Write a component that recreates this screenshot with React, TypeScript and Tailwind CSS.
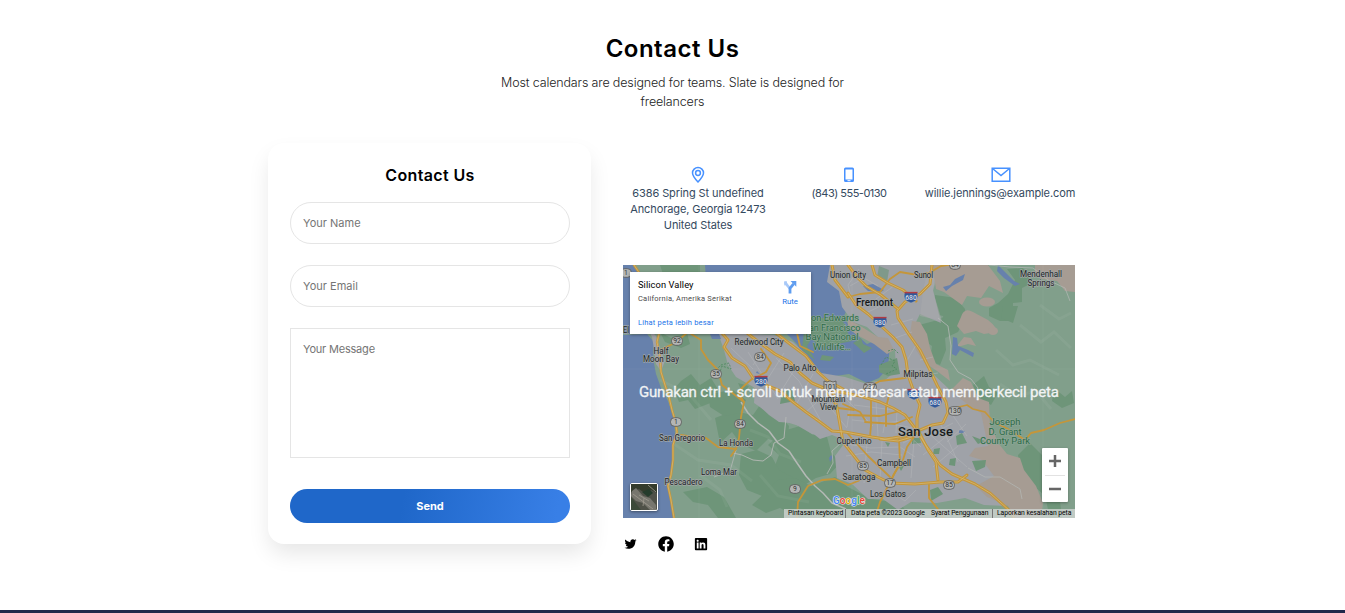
import React from "react";
import { FaTwitter, FaFacebook, FaLinkedin } from "react-icons/fa";

const highways = [
  // Pacific coast route
  "M634 265L642 277L650 292L655 312L660 330L657 342L660 357L661 372L665 385L669 397L672 410L675 420L677 432L673 445L673 460L671 475L668 486L671 500L674 518",
];

const freeways = [
  "M715 325L728 340L724 347L732 358L745 366L753 378L768 386L780 391L793 402L806 412L820 422L832 431L845 432L872 437L885 439L893 438L905 436L920 430L932 425L943 423L948 412L946 402L937 385L929 368L920 350L910 336L898 318L897 311L905 302L920 294L930 284L932 265",
  "M747 333L760 343L775 354L790 362L800 373L812 383L826 389L845 393L860 396L880 402L893 408L905 415L915 428L925 444L940 465L952 474L975 484L990 493L1010 511L1014 518",
  "M848 293L856 305L868 314L880 325L893 337L902 347L906 360L908 375L914 392L920 405L917 418L917 428L928 450L936 462L938 480",
  "M776 333L790 344L806 356L818 372L828 381L843 389",
  "M832 389L837 408L840 425L843 442L854 456L865 470L878 477L890 483L915 484L940 482L958 482L967 475",
  "M880 439L898 441L912 437",
  "M872 265L875 275L888 283L903 290L916 301",
  "M848 265L857 277L866 286L881 295L898 309",
  "M848 297L835 280L832 265",
];

const arterials = [
  "M660 350L675 343L688 332L701 340L701 349L708 360L718 370L722 385L735 395L744 402L741 417L739 438L736 449L718 447L706 438L693 437L681 435",
  "M736 449L731 456",
  "M848 297L860 294L880 292L890 279L900 272L918 275L929 273L941 266L960 263",
  "M753 378L745 385L738 392L744 402",
  "M761 349L771 363L766 372L755 378",
  "M797 518L798 502L808 486L822 480L835 479L848 485L858 481L870 474",
  "M870 437L871 425L871 400",
  "M886 426L886 408L889 395",
  "M865 422L895 424L912 417",
  "M843 404L860 412L865 420",
  "M848 415L880 416L900 411",
  "M826 392L838 408L854 410",
  "M863 390L880 381L905 378L920 373",
  "M899 439L900 463L890 482L880 502L875 518",
  "M848 434L868 456L890 477",
  "M918 431L907 447L903 460L894 474L888 487",
  "M929 485L929 498L941 513L943 518",
  "M955 408L967 405L973 409L985 412L994 422L1008 429L1025 440L1031 433L1044 430L1060 423L1075 419",
  "M813 352L800 346L797 333",
];

const streets = [
  "M748 352L778 399M731 348L753 369M770 342L753 365M784 353L767 380M798 364L780 393M813 374L796 405M776 358L799 381L822 423M818 393L847 428M806 412L824 396M839 392L873 426M852 391L847 427M889 400L883 433M842 443L870 448L900 447L915 457M852 420L884 423L911 420M854 405L894 410M876 402L878 436M897 409L896 433M846 456L871 452L902 455M867 443L864 483M882 441L880 480M914 441L911 478M926 431L967 467M941 425L958 462M920 440L953 423M901 428L921 447M923 455L953 431M933 467L958 446M902 411L921 434M850 286L864 278L878 286M852 300L848 285L859 269M876 299L895 285M868 312L889 302M891 325L913 319M895 338L912 332M916 345L905 364M920 360L933 357M925 375L938 373M941 398L967 436M966 424L947 442M890 491L905 501L916 490M903 443L928 430M881 422L913 428",
];

const routes = [
  ["1", 626, 273], ["92", 677, 341], ["84", 760, 357], ["35", 716, 374], ["1", 676, 422],
  ["84", 740, 424], ["9", 795, 489], ["237", 870, 387], ["85", 863, 466], ["17", 890, 483],
  ["85", 949, 485], ["130", 955, 411], ["84", 955, 265],
] as const;

const interstates = [
  ["280", 761, 381], ["680", 911, 297], ["880", 880, 322], ["880", 914, 394], ["680", 935, 402],
] as const;

const towns = [
  ["Union City", 848, 278, 36], ["Sunol", 923.5, 278, 19], ["Mendenhall", 1041, 277, 42], ["Springs", 1041, 285.5, 27],
  ["Redwood City", 759, 345, 49], ["Palo Alto", 800, 371, 33], ["Milpitas", 918, 377, 29],
  ["Half", 661, 353.5, 15], ["Moon Bay", 661, 361.5, 36], ["Mountain", 828.5, 401.5, 34], ["View", 828.5, 409.5, 17],
  ["Cupertino", 854, 443.5, 35], ["San Gregorio", 682, 441, 46], ["La Honda", 736, 446, 34],
  ["Loma Mar", 719, 475, 36], ["Pescadero", 683.5, 484.5, 38], ["Campbell", 894, 465.5, 34],
  ["Saratoga", 859, 479.5, 33], ["Los Gatos", 888, 496.5, 36], ["El", 626, 333, 6],
] as const;

const parks = [
  ["Don Edwards", 832, 321, 54], ["San Francisco", 832, 330.5, 57], ["Bay National", 832, 340, 53], ["Wildlife…", 832, 349.5, 38],
  ["Joseph", 1005, 425, 31], ["D. Grant", 1005, 434.5, 33], ["County Park", 1005, 443.5, 50],
] as const;

function MapDrawing() {
  return (
    <svg className="block h-full w-full" viewBox="623 265 452 253" fontFamily="Roboto, sans-serif">
      <rect x="623" y="265" width="452" height="253" fill="#819f8b" />
      {/* Forest */}
      <g fill="#6e9579">
        <path d="M660 265H700V290H680L665 280Z M681 381L691 374L700 385L711 378L719 391L707 395L713 402L695 409L688 400L679 402L674 389Z" />
        <path d="M715 418L733 411L753 415L760 405L774 409L789 426L787 445L768 439L756 451L741 444L732 432L720 443Z" />
        <path d="M768 445L783 431L800 426L813 435L826 433L831 452L840 463L830 474L816 478L801 487L790 478L773 471L779 455Z" />
        <path d="M741 454L757 450L772 457L779 470L802 482L790 493L776 490L767 498L747 490L739 475Z" />
        <path d="M778 480L795 478L811 486L835 477L848 487L871 499L900 503L911 518H800L780 508L766 513L752 505Z" />
        <path d="M708 394L733 390L746 400L740 413L724 416L710 407Z M660 332L671 338L687 333L690 344L681 348L665 342Z" />
        <path d="M919 325L938 320L951 313L964 320L958 332L945 338L946 350L940 365L930 361L932 346L920 338Z" />
        <path d="M998 303L1008 294L1015 280L1007 269L1023 268L1032 283L1022 288V302L1013 303V321H1000L989 316V308Z" />
        <path d="M935 295L956 298L965 309L966 323L947 329L943 316L930 313Z M1013 323L1001 318L1003 306L1018 306Z" />
        <path d="M1018 455L1030 443L1042 455L1044 475L1058 485L1062 518H1050L1045 496L1033 485L1022 482Z" />
        <path d="M973 385L984 376L989 387L998 393L991 405L978 397Z M1054 388L1065 397L1072 391L1074 403L1062 408L1052 401Z" />
        <path d="M889 265H905V281L897 287L889 282Z M683 492L707 487L724 497L736 518H718L708 505L693 502Z" />
      </g>
      {/* Ocean */}
      <path d="M623 335L647 334L654 342L653 358L656 374L661 388L668 401L674 419L675 434L672 447L672 470L667 485L672 502L674 518H623Z" fill="#6781ac" />
      <path d="M623 265H635L644 278L655 295L653 319L646 334H623Z" fill="#6781ac" />
      <path d="M646 325L656 336L660 348L665 361L661 371L656 364L654 349L652 337Z" fill="#a1a2a8" />
      {/* Bay */}
      <path d="M705 265H830L838 286L850 302L844 316L850 329L867 344L879 339L890 343L888 368L879 378L867 383L849 374L828 377L817 370L804 358L797 344L786 333L710 334Z" fill="#6781ac" />
      {/* Valley floor and cities */}
      <path d="M714 322L734 333L750 334L774 335L793 342L806 354L821 373L845 377L864 383L885 380L896 371L895 350L883 342L867 327L853 322L842 307L839 291L827 282L830 265H938L933 290L941 323L920 314L912 330L916 349L925 363L932 373L950 390L969 403L983 410L988 431L988 455L1000 474L1012 495L1006 506L984 505L965 498L937 503L911 502L898 510L883 499L868 499L852 484L837 478L835 456L846 441L832 435L820 439L806 428L786 422L780 406L775 417L754 403L755 388L736 377L728 365L724 350Z" fill="#9fa2a8" />
      <path d="M754 385L778 391L805 415L821 420L829 435L812 434L793 423L779 422L769 415L757 404Z" fill="#9fa2a8" />
      <path d="M923 290L928 270L941 265L933 291L942 321L920 316Z" fill="#aaa9ac" opacity=".5" />
      {/* Dry hills */}
      <g fill="#a69c93">
        <path d="M932 265H988L1000 281L1003 293L989 286L981 298L967 296L962 305L944 292L936 289Z" />
        <path d="M961 317Q964 307 973 312L988 320Q998 328 996 332L984 334L976 331L964 334L957 326Z" />
        <ellipse cx="987" cy="302" rx="8" ry="4.500" /><ellipse cx="993" cy="331" rx="5" ry="4" />
        <path d="M957 346L964 337L971 338L976 346L968 344L961 346Z M912 321L920 322L927 334L930 348L936 364L948 370L950 381L937 371L925 363L916 350L910 334Z" />
        <path d="M950 391L963 378L971 382L978 398L989 402L990 425L999 444L1007 454L1020 458L1024 470L1036 486L1043 503L1041 518H1015L1008 506L987 497L976 486L994 476L982 460L969 456L975 448L988 446L981 413L966 403Z" />
        <path d="M848 319L862 327L878 337L888 338L894 350L887 354L874 344L857 335L848 328Z M1035 265H1075V292L1065 291L1057 281L1042 279L1035 272Z" />
      </g>
      <g fill="#6e9579">
        <path d="M806 318H842L846 329L852 341L838 344L818 347L812 338Z" />
        <path d="M853 343L861 338L863 344L872 348L864 353L858 347Z M822 355L834 357L830 361L820 360Z M879 365L897 358L900 374L888 376L879 372Z" />
        <path d="M804 330L812 338L807 346L815 360L802 350Z M738 383L749 386L743 394Z M782 391L792 389L795 401L780 404Z" />
        <path d="M934 449L940 448L939 454L933 454Z M956 436L962 433L967 443L957 445Z M950 459L956 458L955 466L949 465Z M972 436L985 441L978 444Z M898 465L904 466L901 471Z M912 438L920 438L921 443L912 444Z M885 442L890 443L888 447Z M972 461L986 460L985 467L976 471Z M930 490L938 487L943 494L931 501Z" />
        <path d="M879 266L889 270L887 282L877 278Z" opacity=".65" />
      </g>
      {/* Relief */}
      <g stroke="#ffffff" strokeOpacity=".05" fill="none" strokeWidth="3">
        <path d="M660 380L690 395L711 420M668 440L698 460L731 465L752 481M700 475L720 490L727 507M750 430L768 437L780 454L801 462M760 475L778 496L809 502M996 350L1013 365L1030 360L1059 375M1020 325L1041 342L1054 332L1071 348M1000 384L1018 396L1036 391L1051 409M1040 305L1059 319L1071 313" />
      </g>
      {/* Lakes */}
      <g fill="#6781ac">
        <path d="M943 287L950 285L955 279L965 274L963 280L952 286L946 291Z M998 265L1006 273L1014 281L1020 284L1015 286L1004 278L997 271Z M953 337L957 338L958 346L968 350L974 353L973 357L960 350L956 356L952 354Z" />
        <path d="M863 286L873 284L884 290L881 292L868 291Z M710 334L719 334L721 339L712 339Z M831 455L833 457L830 462L829 458Z M959 430L965 431L963 433L959 433Z M757 371L760 374L756 373Z" />
      </g>
      <g stroke="#4f8a60" strokeWidth=".9" fill="none" strokeDasharray="2 1.4">
        <path d="M716 370L721 365L729 363L731 369L722 366L720 372M881 365L886 357L895 361L892 366L897 369L886 374M888 351L894 349L899 354" />
      </g>
      <g fill="none" stroke="#b7b8ba" strokeWidth=".7" opacity=".65">{streets.map((d) => <path key={d} d={d} />)}</g>
      <g fill="none" stroke="#b5b9b6" strokeWidth="1.5" strokeLinejoin="round">
        <path d="M741 402L748 413L758 423L769 431L778 443L789 451L797 463L806 476L815 486L823 493L832 503L846 509" />
        <path d="M733 453L742 455L753 460L763 461L771 455L774 443L784 438L786 417" strokeWidth=".9" />
        <path d="M736 450L730 471L714 477M827 474L833 463L832 451L841 443" strokeWidth=".8" />
        <path d="M938 318L948 326L951 346L950 360L958 372L971 379L978 388" strokeWidth=".8" />
        <path d="M989 265L1010 267L1033 268L1048 280L1065 288L1070 301M968 468L985 477L1000 477L1020 489L1022 499" strokeWidth=".7" />
      </g>
      <g fill="none" stroke="#c4963a" strokeLinejoin="round" strokeLinecap="round">
        <g strokeWidth="1.8">{arterials.map((d) => <path key={d} d={d} />)}</g>
        <g strokeWidth="2.4">{highways.map((d) => <path key={d} d={d} />)}</g>
        <g strokeWidth="3">{freeways.map((d) => <path key={d} d={d} />)}</g>
      </g>
      <g fill="none" stroke="#d3b673" strokeWidth=".8" strokeLinejoin="round">
        {highways.map((d) => <path key={d} d={d} />)}
        {freeways.map((d) => <path key={d} d={d} />)}
      </g>
      <path d="M699 265V518M852 265V518M1043 265V518M623 369H1075" stroke="#fff" strokeOpacity=".05" />
      {/* Route shields */}
      {routes.map(([n, x, y]) => (
        <g key={`${n}-${x}`}>
          <rect x={x - (n.length > 2 ? 6.5 : 5.5)} y={y - 4.3} width={n.length > 2 ? 13 : 11} height="8.6" rx="4" fill="#b4b6b5" stroke="#555" strokeWidth=".8" />
          <text x={x} y={y + 2.4} fontSize="6.8" fill="#333" textAnchor="middle">{n}</text>
        </g>
      ))}
      <path d="M824 381L827 382L830 381L833 382L836 381V389L830 392L824 389Z" fill="#b4b6b5" stroke="#555" strokeWidth=".8" />
      <text x="830" y="389" fontSize="6.8" fill="#333" textAnchor="middle">101</text>
      {interstates.map(([n, x, y]) => (
        <g key={`${n}-${x}`}>
          <path d={`M${x - 6} ${y - 5}H${x + 6}Q${x + 8.5} ${y} ${x + 4.5} ${y + 4}L${x} ${y + 6}L${x - 4.5} ${y + 4}Q${x - 8.5} ${y} ${x - 6} ${y - 5}Z`} fill="#31599a" stroke="#a7adb8" strokeWidth=".5" />
          <path d={`M${x - 6.5} ${y - 4.4}H${x + 6.5}`} stroke="#b13b42" strokeWidth="1.5" />
          <text x={x} y={y + 3.2} fontSize="6.8" fontWeight="500" fill="#d7dce4" textAnchor="middle">{n}</text>
        </g>
      ))}
      <g fontSize="8.5" fill="#222527" stroke="#a4a8a8" strokeWidth="1.3" strokeLinejoin="round" paintOrder="stroke" textAnchor="middle">
        {towns.map(([label, x, y, w]) => <text key={label} x={x} y={y} textLength={w} lengthAdjust="spacingAndGlyphs">{label}</text>)}
        <text x="874.5" y="306" fontSize="10.5" fontWeight="500" textLength="37" lengthAdjust="spacingAndGlyphs" fill="#16191b">Fremont</text>
        <text x="925.5" y="436" fontSize="13" fontWeight="500" textLength="55" fill="#16191b">San Jose</text>
      </g>
      <g fontSize="9.2" fill="#2d6b46" stroke="#91a99b" strokeWidth="1.1" paintOrder="stroke" textAnchor="middle">
        {parks.map(([label, x, y, w]) => <text key={label} x={x} y={y} textLength={w} lengthAdjust="spacingAndGlyphs">{label}</text>)}
      </g>
      <g fontSize="11" fontWeight="500" stroke="#e6e9ea" strokeWidth="1.2" paintOrder="stroke">
        <text x="833" y="504" textLength="32" lengthAdjust="spacingAndGlyphs">
          <tspan fill="#4285f4">G</tspan><tspan fill="#ea4335">o</tspan><tspan fill="#e9ad00">o</tspan><tspan fill="#4285f4">g</tspan><tspan fill="#34a853">l</tspan><tspan fill="#ea4335">e</tspan>
        </text>
      </g>
      <text x="849" y="397" fontSize="15" fill="#f1f3f4" stroke="#f1f3f4" strokeWidth=".3" textAnchor="middle" textLength="420">Gunakan ctrl + scroll untuk memperbesar atau memperkecil peta</text>
    </svg>
  );
}

function MapPanel() {
  return (
    <div className="relative h-[253px] w-[452px] overflow-hidden font-[Roboto,sans-serif]">
      <MapDrawing />
      <div className="absolute left-[7px] top-[7px] flex h-[62px] w-[181px] justify-between bg-white pl-2 pr-[13px] pt-[7px] shadow-[0_1px_3px_rgba(0,0,0,.35)]">
        <div className="flex flex-col whitespace-nowrap">
          <span className="text-[9.3px] leading-[11px] tracking-[0.08px] text-black">Silicon Valley</span>
          <span className="mt-[3px] text-[7.5px] leading-[11px] tracking-[0.22px] text-[#4b4b4b]">California, Amerika Serikat</span>
          <span className="mt-[13px] text-[7.5px] leading-[11px] tracking-[0.2px] text-[#1a73e8]">Lihat peta lebih besar</span>
        </div>
        <div className="flex flex-col items-center">
          <svg className="mt-px h-[14px] w-[14px]" viewBox="0 0 14 14" fill="none">
            <path d="M2.2 2.8L7 8.6" stroke="#a9c9f8" strokeWidth="2.6" />
            <path d="M7 13.5V8.3L10.6 3.8" stroke="#5f9df0" strokeWidth="2.8" />
            <path d="M7.5 1H13.3V6.8Z" fill="#5f9df0" />
            <path d="M1 1.5L3.6 1L4.4 4.4L1.4 5.5Z" fill="#a9c9f8" />
          </svg>
          <span className="mt-px text-[7.8px] leading-[14px] text-[#1a73e8]">Rute</span>
        </div>
      </div>
      <div className="absolute bottom-[7px] left-[7px] h-7 w-7 rounded-[2px] border border-white bg-[#4f5148] shadow-[0_1px_3px_rgba(0,0,0,.4)]">
        <svg className="h-full w-full" viewBox="0 0 26 26" fill="none">
          <path d="M0 0H26V9L20 6L15 10L8 5L0 8Z" fill="#343c2c" />
          <path d="M1 7L5 4L12 12L19 14L25 21V26H19L12 19L5 17L0 12Z" fill="#77766e" />
          <path d="M11 8L18 5L22 9L17 13Z" fill="#253c2c" />
          <path d="M0 13L10 26H0Z" fill="#3c4939" />
          <path d="M2 10L22 25M8 11L18 17M13 14L12 22M17 1L25 8" stroke="#a09b8f" strokeWidth=".8" />
        </svg>
      </div>
      <div className="absolute bottom-4 right-[7px] flex h-[54px] w-[26px] flex-col items-center rounded-[1px] bg-white shadow-[0_1px_3px_rgba(0,0,0,.3)]">
        <svg className="h-full w-full" viewBox="0 0 26 54" stroke="#666" strokeWidth="2.5">
          <path d="M7 13H19M13 7V19M7 41H19" />
          <path d="M3 27.5H23" stroke="#e2e2e2" strokeWidth="1" />
        </svg>
      </div>
      <div className="absolute bottom-0 right-0 flex h-[9px] whitespace-nowrap bg-[#d0d4d2]/80 text-[6.8px] leading-[9px] text-black">
        <span className="w-[62px] border-r border-[#777] pl-1 tracking-[-0.03px]">Pintasan keyboard</span>
        <span className="w-[81px] pl-[5px] tracking-[-0.03px]">Data peta ©2023 Google</span>
        <span className="w-[66px] border-r border-[#777] pl-1 tracking-[-0.07px]">Syarat Penggunaan</span>
        <span className="w-[82px] pl-1 tracking-[-0.06px]">Laporkan kesalahan peta</span>
      </div>
    </div>
  );
}

function ContactForm() {
  return (
    <form className="flex h-[401px] w-[323px] flex-col rounded-2xl bg-white pl-[22px] pr-[21px] shadow-[0_11px_22px_-2px_rgba(0,0,0,.1)]">
      <h2 className="mt-5 text-center text-[16px] font-semibold leading-6 tracking-[0.35px] text-black">Contact Us</h2>
      <input className="mt-[15px] h-[42px] w-full rounded-full border border-[#e5e5e5] px-3 text-[11px] tracking-[0.02px] placeholder:text-[#757575]" placeholder="Your Name" />
      <input className="mt-[21px] h-[42px] w-full rounded-full border border-[#e5e5e5] px-3 text-[11px] tracking-[0.02px] placeholder:text-[#757575]" placeholder="Your Email" />
      <textarea className="mt-[21px] h-[130px] w-full resize-none border border-[#e5e5e5] px-3 py-3 text-[11px] leading-4 tracking-[-0.2px] placeholder:text-[#757575]" placeholder="Your Message" />
      <button type="button" className="mt-[31px] h-[34px] w-full rounded-full bg-[linear-gradient(100deg,#1f67c9_0%,#1f67c9_40%,#387fe6_95%)] text-[11px] font-bold tracking-[-0.05px] text-white">Send</button>
    </form>
  );
}

export default function App() {
  return (
    <main className="flex h-[613px] w-full flex-col items-center overflow-hidden border-b-[3px] border-[#20274a] bg-white font-[Inter,sans-serif]">
      <header className="flex w-[360px] flex-col items-center pt-[33px] text-center">
        <h1 className="text-[24px] font-semibold leading-8 tracking-[0.5px] text-black">Contact Us</h1>
        <p className="mt-2 whitespace-nowrap text-[12.5px] font-light leading-[19px] tracking-[-0.15px] text-[#222]">
          Most calendars are designed for teams. Slate is designed for<br />freelancers
        </p>
      </header>
      <div className="mt-[32px] flex w-[809px] gap-8">
        <ContactForm />
        <section className="flex w-[452px] flex-col pt-[23px]">
          <div className="flex h-[99px] justify-between text-center text-[11px] leading-4 tracking-[-0.1px] text-[#34495e]">
            <div className="flex w-[150px] flex-col items-center whitespace-nowrap">
              <svg className="h-[18px] w-[18px]" viewBox="0 0 18 18" fill="none" stroke="#4791ff" strokeWidth="1.5">
                <path d="M9 16C6.5 13.3 3.5 10 3.5 7A5.5 5.5 0 0 1 14.500 7C14.500 10 11.500 13.300 9 16Z" />
                <circle cx="9" cy="7" r="2.4" />
              </svg>
              <span className="mt-px">6386 Spring St undefined<br />Anchorage, Georgia 12473<br />United States</span>
            </div>
            <div className="flex w-[150px] flex-col items-center whitespace-nowrap">
              <svg className="h-[18px] w-[18px]" viewBox="0 0 18 18">
                <path d="M5.500 1.500H12.500Q14 1.500 14 3V14.500Q14 16 12.500 16H5.500Q4 16 4 14.500V3Q4 1.500 5.500 1.500ZM5.500 3.500V13.500H12.500V3.500Z" fill="#4791ff" fillRule="evenodd" />
                <path d="M7.500 14.700H10.500" stroke="white" />
              </svg>
              <span className="mt-px tracking-[-0.5px]">(843) 555-0130</span>
            </div>
            <div className="flex w-[150px] flex-col items-center whitespace-nowrap">
              <svg className="ml-[2px] h-[18px] w-5" viewBox="0 0 20 18" fill="none" stroke="#4791ff" strokeWidth="1.5">
                <path d="M1.200 2.200H18.800V15.300H1.200ZM1.500 2.500L10 9.500L18.500 2.500" />
              </svg>
              <span className="mt-px">willie.jennings@example.com</span>
            </div>
          </div>
          <MapPanel />
          <div className="mt-[18px] flex items-center text-black">
            <FaTwitter className="ml-[1px] h-3 w-[13px]" />
            <FaFacebook className="ml-[21px] h-4 w-4" />
            <FaLinkedin className="ml-5 h-[14px] w-[14px]" />
          </div>
        </section>
      </div>
    </main>
  );
}
